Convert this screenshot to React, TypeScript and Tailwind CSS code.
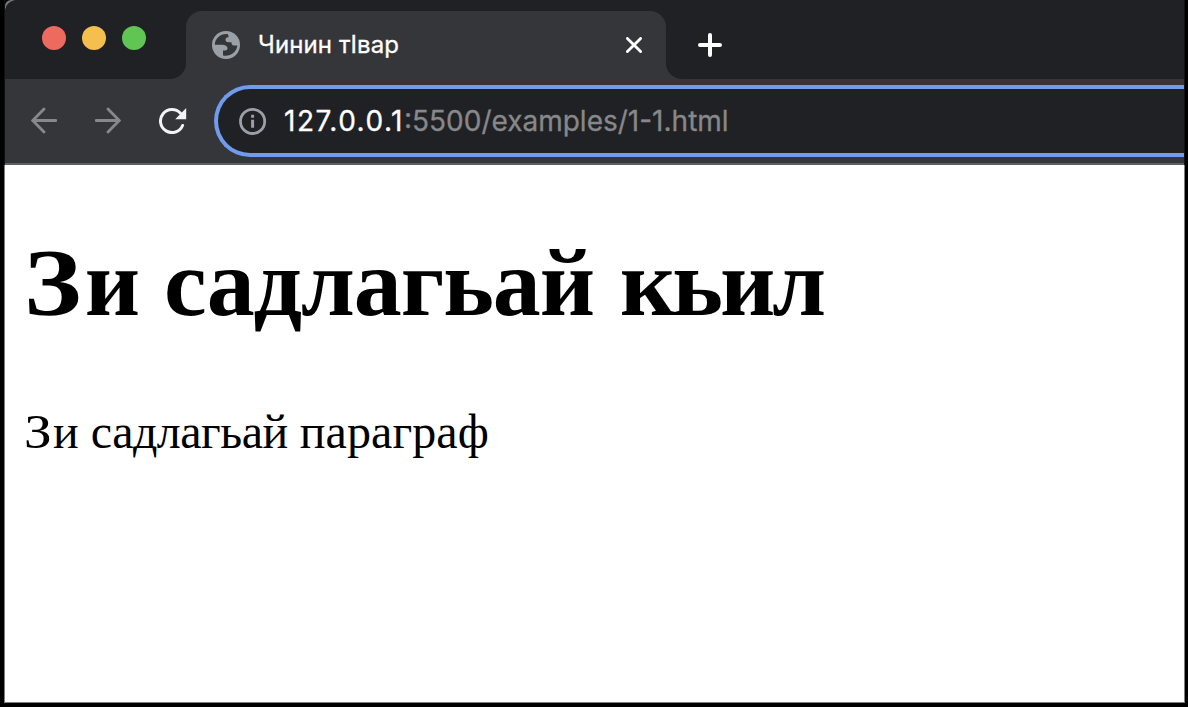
import React from "react";

const UI = "font-['Inter','Liberation_Sans',sans-serif]";

function TrafficLights() {
  return (
    <div className="flex gap-4 pl-[37px] pt-[26px]">
      <span className="size-6 rounded-full bg-[#ed6a5e]" />
      <span className="size-6 rounded-full bg-[#f5bf4f]" />
      <span className="size-6 rounded-full bg-[#61c554]" />
    </div>
  );
}

function GlobeIcon() {
  return (
    <svg className="size-7 shrink-0" viewBox="0 0 28 28">
      <circle cx="14" cy="14" r="14" fill="#9aa0a6" />
      <path
        fill="#35363a"
        d="M15.500 3C8.500 2.400 3 7.500 2.800 13.700H9.500c3.500 0 6 1.300 6 3.600 0 1.500-1 2.200-2.500 2.200h-2v5c7 1.500 14-3.500 14.300-10h-3.300c-2 0-2.500-1.300-2.500-3.300H17c-2.500 0-3.500-.8-3.500-2.500s1.200-2.500 3-2.500c0-1.500-.2-2.500-1-3.200z"
      />
    </svg>
  );
}

function TabStrip() {
  return (
    <div className="flex h-[79px] bg-[#35363a]">
      <div className="w-[181px] rounded-br-[16px] bg-[#202124]">
        <TrafficLights />
      </div>
      <div className="w-[480px] bg-[linear-gradient(#202124_50%,#35363a_50%)] pt-[11px]">
        <div className="flex h-[68px] items-center rounded-t-[16px] bg-[#35363a] pl-[26px] pr-[24px]">
          <GlobeIcon />
          <span className={`${UI} ml-[18px] grow whitespace-nowrap text-[24px] leading-[28px] tracking-[0.1px] text-white [-webkit-text-stroke:0.3px_#fff]`}>
            Чинин тӀвар
          </span>
          <svg className="size-4" viewBox="0 0 16 16" fill="none" stroke="#fff" strokeWidth="2.8" strokeLinecap="round">
            <path d="M1.400 1.400 14.600 14.600M14.600 1.400 1.400 14.600" />
          </svg>
        </div>
      </div>
      <div className="grow rounded-bl-[16px] bg-[#202124] pl-[32px] pt-[33px]">
        <svg className="size-6" viewBox="0 0 24 24" fill="none" stroke="#fff" strokeWidth="4" strokeLinecap="round">
          <path d="M12 2v20M2 12h20" />
        </svg>
      </div>
    </div>
  );
}

function Toolbar() {
  return (
    <div className="flex h-[86px] items-start border-b-2 border-[#5f6063] bg-[#35363a] pt-[6px]">
      <div className="flex h-[70px] w-[209px] shrink-0 items-center pl-[26px]">
        <svg className="h-7 w-[26px]" viewBox="0 0 26 28" fill="none" stroke="#87888a" strokeWidth="2.800" strokeLinecap="round">
          <path d="M25 14.500H2M13 3 1.700 14.500 13 26" />
        </svg>
        <svg className="ml-[38px] h-7 w-[26px]" viewBox="0 0 26 28" fill="none" stroke="#87888a" strokeWidth="2.800" strokeLinecap="round">
          <path d="M1 14.500h23M13 3l11.300 11.500L13 26" />
        </svg>
        <svg className="ml-[38px] h-7 w-7" viewBox="0 0 28 28">
          <path d="M23.600 19.500A11.500 11.500 0 1 1 21.500 7.300" fill="none" stroke="#f1f3f4" strokeWidth="3" strokeLinecap="round" />
          <path d="M27.200 2v11.200H16.200z" fill="#f1f3f4" />
        </svg>
      </div>
      <div className="flex h-[72px] grow items-center rounded-l-full border-4 border-r-0 border-[#709cee] bg-[#202124] pl-[21px]">
        <svg className="size-7" viewBox="0 0 28 28">
          <circle cx="13.600" cy="14.400" r="12.100" fill="none" stroke="#9aa0a6" strokeWidth="2.800" />
          <path d="M12.100 7.800h3v3h-3zM12.100 12.800h3v8h-3z" fill="#9aa0a6" />
        </svg>
        <span className={`${UI} ml-[17px] whitespace-nowrap text-[28px] leading-[34px] text-[#87888a]`}>
          <span className="tracking-[1.5px] text-white [-webkit-text-stroke:0.3px_#fff]">127.0.0.1</span>
          <span className="[-webkit-text-stroke:0.3px_#87888a]">:5500/examples/1-1.html</span>
        </span>
      </div>
    </div>
  );
}

export default function App() {
  return (
    <div className="h-[707px] w-[1188px] overflow-hidden bg-black pl-1 pr-[3px]">
      <div className="flex h-[703px] flex-col">
        <div className="border-x border-x-[#111214]">
          <div className="overflow-hidden rounded-tl-[6px] bg-[#77787a]">
            <div className="overflow-hidden rounded-tl-[12px]">
              <TabStrip />
              <Toolbar />
            </div>
          </div>
        </div>
        <main className="grow border-x border-b border-[#808080] bg-white pl-5 pt-[63px] font-['Liberation_Serif','Times_New_Roman',serif] text-black">
          <h1 className="whitespace-nowrap text-[96px] font-bold leading-[110px]">
            <span className="-ml-px mr-[10px] inline-block origin-left scale-x-[1.13]">З</span>
            <span>и</span>{" "}
            <span className="mr-[2px] tracking-[-1.1px]">садлагьай</span>{" "}
            <span className="tracking-[-3px]">кьил</span>
          </h1>
          <p className="mt-[66px] whitespace-nowrap text-[48px] leading-[56px]">
            <span className="-ml-px mr-[5px] inline-block origin-left scale-x-[1.15]">З</span>
            <span>и</span>{" "}
            <span className="tracking-[-0.5px]">садлагьай</span>{" "}
            <span className="tracking-[0.1px]">параграф</span>
          </p>
        </main>
      </div>
    </div>
  );
}
